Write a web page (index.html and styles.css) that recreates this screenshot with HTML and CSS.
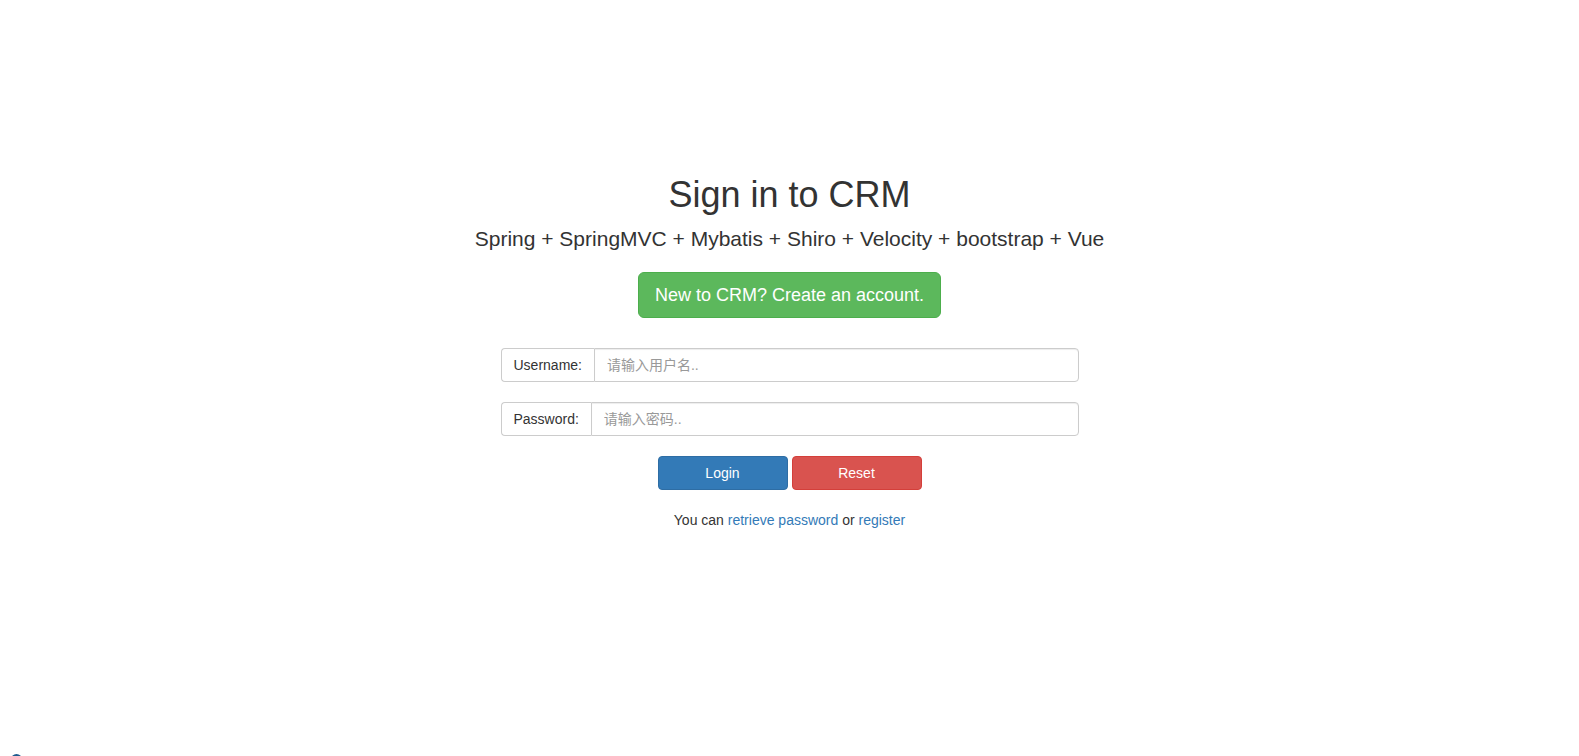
FILE: index.html
```html
<!DOCTYPE html>
<html lang="en">
<head>
<meta charset="utf-8">
<title>Sign in to CRM</title>
<link rel="stylesheet" href="styles.css">
</head>
<body>
<main class="login">
  <h1 class="title">Sign in to CRM</h1>
  <p class="subtitle">Spring + SpringMVC + Mybatis + Shiro + Velocity + bootstrap + Vue</p>
  <a class="btn btn-lg btn-success" href="#">New to CRM? Create an account.</a>
  <form class="form">
    <div class="input-group">
      <span class="addon">Username:</span>
      <input class="control" type="text" placeholder="请输入用户名..">
    </div>
    <div class="input-group">
      <span class="addon">Password:</span>
      <input class="control" type="password" placeholder="请输入密码..">
    </div>
    <div class="actions">
      <button type="button" class="btn btn-action btn-primary">Login</button>
      <button type="reset" class="btn btn-action btn-danger">Reset</button>
    </div>
  </form>
  <p class="hint">You can <a href="#">retrieve password</a> or <a href="#">register</a></p>
</main>
<div class="float-dot"></div>
</body>
</html>
```
FILE: styles.css
```css
html, body {
  margin: 0;
  padding: 0;
  height: 756px;
  overflow: hidden;
  background: #fff;
}
body {
  font-family: "Liberation Sans", Arial, "Noto Sans CJK SC", sans-serif;
  font-size: 14px;
  line-height: 20px;
  color: #333;
}
.login {
  display: flex;
  flex-direction: column;
  align-items: center;
  padding-top: 175px;
}
.title {
  margin: 0;
  font-size: 36px;
  line-height: 40px;
  font-weight: 500;
}
.subtitle {
  margin: 12px 0 0;
  font-size: 21px;
  line-height: 24px;
}
.btn {
  display: inline-block;
  box-sizing: border-box;
  border: 1px solid transparent;
  font-family: inherit;
  color: #fff;
  text-align: center;
  text-decoration: none;
  cursor: pointer;
}
.btn-lg {
  margin-top: 21px;
  padding: 10px 16px;
  font-size: 18px;
  line-height: 24px;
  border-radius: 6px;
}
.btn-success {
  background: #5cb85c;
  border-color: #4cae4c;
}
.form {
  margin-top: 30px;
  display: flex;
  flex-direction: column;
  align-items: center;
  gap: 20px;
}
.input-group {
  display: flex;
  width: 578px;
  height: 34px;
  box-sizing: border-box;
}
.addon {
  display: flex;
  align-items: center;
  padding: 0 12px;
  border: 1px solid #ccc;
  border-right: 0;
  border-radius: 4px 0 0 4px;
  background: #fff;
  color: #333;
  font-size: 14px;
  white-space: nowrap;
}
.control {
  flex: 1;
  min-width: 0;
  margin: 0;
  padding: 6px 12px;
  border: 1px solid #ccc;
  border-radius: 0 4px 4px 0;
  font-family: "Liberation Sans", Arial, "Noto Sans CJK SC", sans-serif;
  font-size: 14px;
  color: #555;
  outline: none;
  box-shadow: inset 0 1px 1px rgba(0,0,0,.075);
}
.control::placeholder {
  color: #999;
}
.actions {
  display: flex;
  gap: 4px;
}
.btn-action {
  width: 130px;
  height: 34px;
  padding: 6px 12px;
  font-size: 14px;
  line-height: 20px;
  border-radius: 4px;
}
.btn-primary {
  background: #337ab7;
  border-color: #2e6da4;
}
.btn-danger {
  background: #d9534f;
  border-color: #d43f3a;
}
.hint {
  margin: 20px 0 0;
  font-size: 14px;
  line-height: 20px;
}
.hint a {
  color: #337ab7;
  text-decoration: none;
}
.float-dot {
  position: fixed;
  left: 11px;
  top: 754px;
  width: 11px;
  height: 11px;
  border-radius: 50%;
  background: #1f5c8f;
}
```
